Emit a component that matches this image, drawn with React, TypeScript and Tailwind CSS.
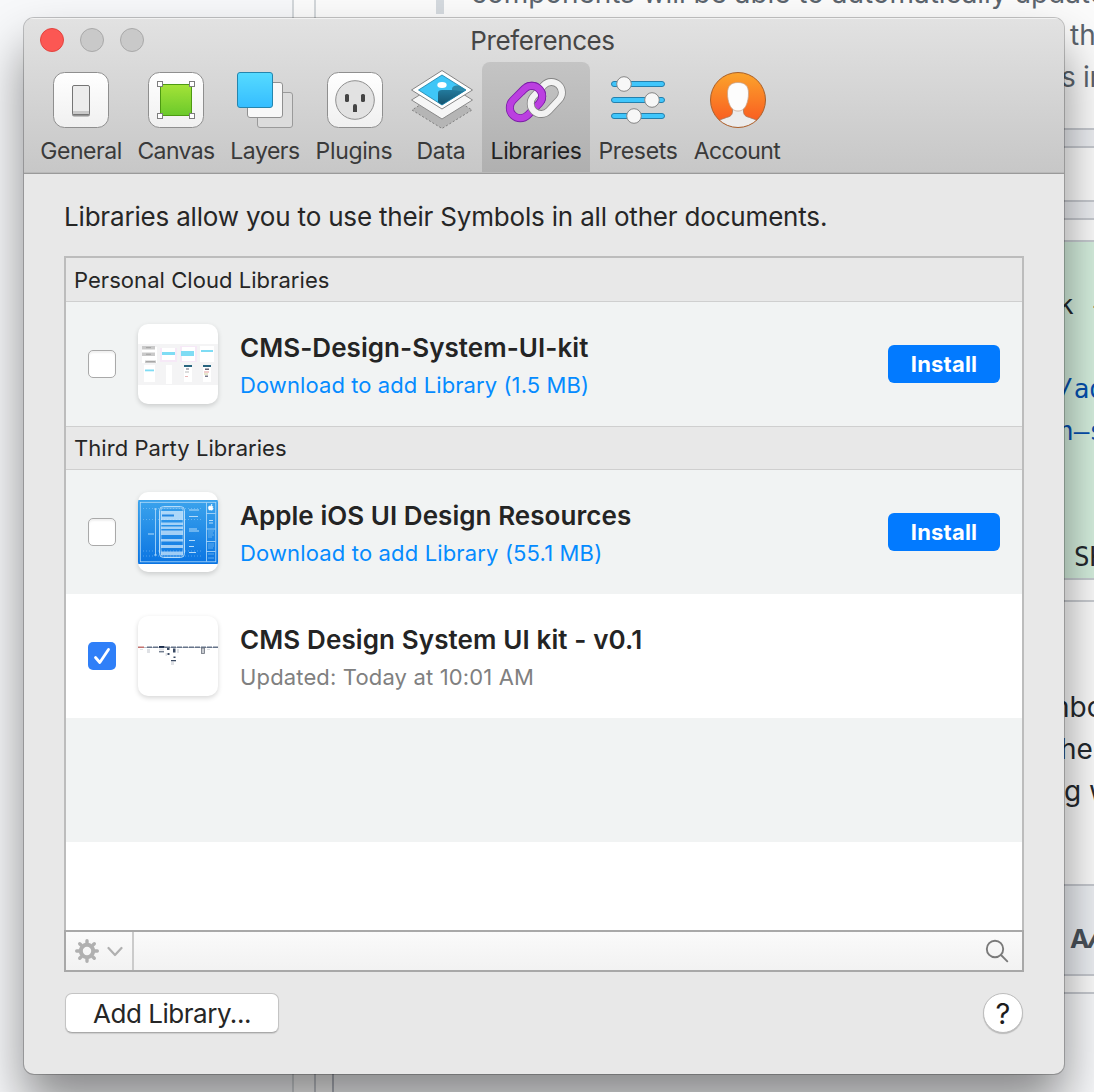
import type { ReactNode } from "react";

const ui = "font-['Inter','Liberation_Sans',sans-serif]";

function GeneralIcon() {
  return (
    <svg className="size-16 overflow-visible" viewBox="0 0 64 64">
      <defs>
        <linearGradient id="plate" x1="0" y1="0" x2="0" y2="1">
          <stop offset="0" stopColor="#ffffff" />
          <stop offset="1" stopColor="#f0f0f0" />
        </linearGradient>
      </defs>
      <rect x="4.5" y="4.5" width="55" height="55" rx="11" fill="url(#plate)" stroke="#8f8f8f" />
      <rect x="23" y="19" width="18" height="29.500" rx="2" fill="#555" opacity=".6" />
      <rect x="23.5" y="17.5" width="17" height="29" rx="1.5" fill="#ececec" stroke="#757575" />
      <rect x="24" y="43" width="16" height="3" fill="#c9c9c9" />
    </svg>
  );
}

function CanvasIcon() {
  return (
    <svg className="size-16 overflow-visible" viewBox="0 0 64 64">
      <defs>
        <linearGradient id="leaf" x1="0" y1="0" x2="0" y2="1">
          <stop offset="0" stopColor="#a4e338" />
          <stop offset="1" stopColor="#6bc92b" />
        </linearGradient>
      </defs>
      <rect x="4.5" y="4.5" width="55" height="55" rx="11" fill="url(#plate)" stroke="#8f8f8f" />
      <rect x="16.5" y="16.5" width="31" height="31" fill="url(#leaf)" stroke="#4d9a12" />
      {[16, 48].map((x) =>
        [16, 48].map((y) => (
          <rect key={`${x}-${y}`} x={x - 2.5} y={y - 2.5} width="5" height="5" fill="#fff" stroke="#7d7d7d" />
        )),
      )}
    </svg>
  );
}

function LayersIcon() {
  return (
    <svg className="size-16 overflow-visible" viewBox="0 0 64 64">
      <defs>
        <linearGradient id="sky" x1="0" y1="0" x2="0" y2="1">
          <stop offset="0" stopColor="#56dbff" />
          <stop offset="1" stopColor="#35bdff" />
        </linearGradient>
      </defs>
      <rect x="24.5" y="24.5" width="35" height="35" rx="2.5" fill="#dcdcdc" stroke="#9a9a9a" />
      <rect x="14.5" y="14.5" width="35" height="35" rx="2.5" fill="#f8f8f8" stroke="#909090" />
      <rect x="4.5" y="4.5" width="35" height="35" rx="2.5" fill="url(#sky)" stroke="#2585ad" />
    </svg>
  );
}

function PluginsIcon() {
  return (
    <svg className="size-16 overflow-visible" viewBox="0 0 64 64">
      <rect x="5.5" y="4.5" width="55" height="55" rx="11" fill="url(#plate)" stroke="#8f8f8f" />
      <circle cx="33" cy="32" r="19.3" fill="#e2e2e2" stroke="#8f8f8f" />
      <rect x="23" y="26" width="4" height="8" rx="1.6" fill="#444" />
      <rect x="39" y="26" width="4" height="8" rx="1.6" fill="#444" />
      <path d="M31 44v-6a2 2 0 0 1 4 0v6z" fill="#444" />
    </svg>
  );
}

function DataIcon() {
  return (
    <svg className="size-16 overflow-visible" viewBox="0 0 64 64">
      <defs>
        <clipPath id="photo">
          <path d="M33 7 57 22 33 37 9.500 22z" />
        </clipPath>
        <linearGradient id="dusk" x1="0" y1="0" x2="0" y2="1">
          <stop offset="0" stopColor="#227a9d" />
          <stop offset="1" stopColor="#134a63" />
        </linearGradient>
      </defs>
      <path d="M33 23 63 42 33 60.500 3 42z" fill="#b5b5b5" stroke="#808080" strokeDasharray="2 2" />
      <path d="M33 13 63.500 32 33 51 2.500 32z" fill="#f6f6f6" stroke="#8a8a8a" />
      <path d="M33 2.500 63.500 22 33 41 2.500 22z" fill="#fff" stroke="#858585" />
      <g clipPath="url(#photo)">
        <rect x="8" y="6" width="50" height="32" fill="#3fc6f7" />
        <ellipse cx="33" cy="17" rx="4.700" ry="3" fill="#fff" />
        <path d="M43 22v-1q0-3 4-3.500h12v14H43z" fill="#2c88a8" />
        <path d="M29 40V25q0-3 4-3h10q4 0 7 1h8v17z" fill="url(#dusk)" />
      </g>
      <path d="M33 7 57 22 33 37 9.500 22z" fill="none" stroke="#1c7fa6" strokeWidth=".8" />
    </svg>
  );
}

function LibrariesIcon() {
  return (
    <svg className="size-16 overflow-visible" viewBox="0 0 64 64">
      <defs>
        <clipPath id="over">
          <rect x="20" y="8" width="30" height="27" />
        </clipPath>
        <g id="violet" fill="none" transform="rotate(-45 22 34)">
          <rect x="3.500" y="23.500" width="37" height="21" rx="10.500" stroke="#7b1fa6" strokeWidth="8" />
          <rect x="3.500" y="23.500" width="37" height="21" rx="10.500" stroke="#bb3fe0" strokeWidth="6.400" />
        </g>
      </defs>
      <use href="#violet" />
      <g fill="none" transform="rotate(-47 42.300 30)">
        <rect x="24.300" y="19.500" width="36" height="21" rx="10.500" stroke="#858585" strokeWidth="7.800" />
        <rect x="24.300" y="19.500" width="36" height="21" rx="10.500" stroke="#f3f3f3" strokeWidth="6.200" />
      </g>
      <use href="#violet" clipPath="url(#over)" />
    </svg>
  );
}

function PresetsIcon() {
  return (
    <svg className="size-16 overflow-visible" viewBox="0 0 64 64">
      {[
        [16, 18],
        [32, 46],
        [48, 28],
      ].map(([y, x]) => (
        <g key={y}>
          <rect x="5.500" y={y - 2.5} width="53" height="5" rx="2.500" fill="#40c6fb" stroke="#2480ad" />
          <circle cx={x} cy={y} r="7.300" fill="#f7f7f7" stroke="#868686" />
        </g>
      ))}
    </svg>
  );
}

function AccountIcon() {
  return (
    <svg className="size-16 overflow-visible" viewBox="0 0 64 64">
      <defs>
        <linearGradient id="amber" x1="0" y1="0" x2="0" y2="1">
          <stop offset="0" stopColor="#fba42c" />
          <stop offset="1" stopColor="#f9541f" />
        </linearGradient>
        <clipPath id="badge">
          <circle cx="33" cy="32" r="27.500" />
        </clipPath>
      </defs>
      <circle cx="33" cy="32" r="27.500" fill="url(#amber)" />
      <g clipPath="url(#badge)" stroke="#a87558" strokeWidth=".8">
        <path d="M27.500 36v7c0 4-2 5.500-6 6.500l-7 2.500v12h37V52l-7-2.500c-4-1-6-2.500-6-6.500v-7z" fill="#ececec" />
        <path d="M33 14.500c7 0 10.500 3.500 10.500 10.500 0 5-.8 9-2.500 12.500-2 4-4.500 5.500-8 5.500s-6-1.500-8-5.500c-1.700-3.500-2.500-7.500-2.500-12.500 0-7 3.500-10.500 10.500-10.500z" fill="#fdfdfd" stroke="#c9a48c" />
      </g>
      <circle cx="33" cy="32" r="27.500" fill="none" stroke="#a8602c" />
    </svg>
  );
}

const tabs: { label: string; icon: ReactNode; width: string; tracking: string }[] = [
  { label: "General", icon: <GeneralIcon />, width: "w-[98px]", tracking: "tracking-[-0.45px]" },
  { label: "Canvas", icon: <CanvasIcon />, width: "w-[92px]", tracking: "tracking-[-0.6px]" },
  { label: "Layers", icon: <LayersIcon />, width: "w-[86px]", tracking: "tracking-[-0.5px]" },
  { label: "Plugins", icon: <PluginsIcon />, width: "w-[92px]", tracking: "tracking-[-0.35px]" },
  { label: "Data", icon: <DataIcon />, width: "w-[82px]", tracking: "tracking-[-0.3px]" },
  { label: "Libraries", icon: <LibrariesIcon />, width: "w-[108px]", tracking: "tracking-[-0.38px]" },
  { label: "Presets", icon: <PresetsIcon />, width: "w-[96px]", tracking: "tracking-[-0.35px]" },
  { label: "Account", icon: <AccountIcon />, width: "w-[102px]", tracking: "tracking-[-0.6px]" },
];

function KitThumb() {
  return (
    <svg className="size-20" viewBox="0 0 80 80">
      <rect y="20" width="80" height="41" fill="#f4f4f5" />
      <g fill="#fff">
        <rect x="4" y="23" width="15" height="16" />
        <rect x="22" y="24" width="17" height="14" fill="#f6e9f7" />
        <rect x="42" y="22" width="17" height="16" fill="#f6e9f7" />
        <rect x="24" y="24" width="13" height="12" />
        <rect x="44" y="23" width="13" height="14" />
        <rect x="62" y="22" width="14" height="16" />
        <rect x="6" y="41" width="11" height="17" />
        <rect x="28" y="41" width="6" height="19" />
        <rect x="46" y="41" width="8" height="17" />
        <rect x="65" y="41" width="8" height="17" />
      </g>
      <g fill="#c9c9c9">
        <rect x="4" y="22" width="13" height="3.500" />
        <rect x="4" y="28.500" width="13" height="3.500" />
        <rect x="7" y="36.500" width="11" height="2.500" />
      </g>
      <g fill="#999">
        <rect x="8" y="23.300" width="5" height=".8" />
        <rect x="8" y="29.800" width="5" height=".8" />
        <rect x="8" y="37.300" width="9" height=".8" />
      </g>
      <g fill="#7fdcf4">
        <rect x="24" y="28" width="13" height="3" />
        <rect x="43" y="27" width="13" height="5" />
        <rect x="63" y="26" width="12" height="2" />
        <rect x="7" y="45.500" width="9" height="1.800" />
      </g>
      <rect x="46" y="41" width="8" height="2" fill="#27647f" />
      <rect x="65" y="41" width="8" height="2" fill="#27647f" />
      <rect x="48" y="44.500" width="3" height="1" fill="#667" />
      <rect x="67" y="44.500" width="4" height="1.500" fill="#667" />
      <rect x="47" y="47.500" width="4" height="1" fill="#bbb" />
      <rect x="66" y="47.500" width="5" height="1" fill="#e49b9b" />
      <rect x="66" y="49.500" width="4" height="1" fill="#cfcf9b" />
      <rect x="67" y="51.500" width="3" height="1.500" fill="#778" />
      <rect x="47" y="52" width="3" height="1" fill="#e8b5b5" />
    </svg>
  );
}

function BlueprintThumb() {
  return (
    <svg className="size-20" viewBox="0 0 80 80">
      <defs>
        <linearGradient id="blueprint" x1="0" y1="0" x2="0" y2="1">
          <stop offset="0" stopColor="#3ba3ec" />
          <stop offset="1" stopColor="#0a74e2" />
        </linearGradient>
      </defs>
      <rect y="8" width="80" height="64" fill="url(#blueprint)" />
      <g fill="none" stroke="#b5dcfa" strokeWidth=".8">
        <rect x="2.300" y="10.300" width="75.500" height="59.500" />
        <path d="M68.500 10.500v59M68.500 21.500h9M68.500 37h9M68.500 49.500h9M68.500 59.500h9M17.500 16.500v47M16 17h3M16 63h3" />
        <path d="M5 16.500h60M5 27.500h60M5 59h60M5 64h60" strokeDasharray="1 2" strokeWidth=".4" />
        <rect x="21.500" y="14.500" width="25" height="51" rx="4" strokeWidth="1" />
        <rect x="23" y="16" width="22" height="48" rx="2.500" strokeWidth=".6" />
      </g>
      <rect x="23" y="19" width="22" height="9" fill="#d5ecfd" opacity=".75" />
      <rect x="24" y="22.500" width="12" height="2" fill="#2487e2" />
      <g fill="#cfe8fc" opacity=".75">
        <rect x="23" y="30.500" width="22" height="2.500" />
        <rect x="23" y="34.500" width="22" height="2.500" />
        <rect x="23" y="38.500" width="22" height="4.500" />
        <rect x="23" y="47" width="22" height="2.500" />
        <rect x="23" y="53" width="22" height="3" />
        <rect x="23" y="59.500" width="22" height="3.500" />
      </g>
      <g fill="#b4dbf9">
        <rect x="51" y="17.500" width="10" height="1" />
        <rect x="51" y="24" width="9" height="1" />
        <rect x="51" y="36.500" width="8" height="1" />
        <rect x="51" y="38.500" width="10" height="1" />
        <rect x="51" y="48" width="6" height="1" />
        <rect x="51" y="54" width="5" height="1" />
        <rect x="51" y="60" width="7" height="1" />
        <rect x="10" y="41.500" width="6" height="1" />
        <rect x="71" y="28" width="4" height="1" />
        <rect x="71" y="30.500" width="4" height="1" />
      </g>
      <path d="M70 39h6M70 41h5M70 43h6M70 45h4M70 52h6M70 54h6M70 56h5M70 62h6M70 66h6" stroke="#7fc0f4" strokeWidth=".7" />
      <path d="M73 14.200q1-.5 2 .4-.9 1 .2 2.200-.9 2-1.900 1.300-.8-.4-1.500 0c-1.300.2-2.200-3.700-.3-4 .6-.1 1 .3 1.500.1zm0-.5q0-1.200 1-1.500 0 1.200-1 1.500z" fill="#fff" stroke="#fff" strokeWidth=".6" />
    </svg>
  );
}

function SheetThumb() {
  return (
    <svg className="size-20" viewBox="0 0 80 80">
      <rect y="31" width="80" height="1" fill="#b9bfc9" />
      <rect y="30.500" width="6" height="1.500" fill="#c4726f" />
      {[9, 15, 21, 27, 33, 39, 45, 51, 57, 63, 69, 75].map((x) => (
        <rect key={x} x={x} y="30.500" width="5" height="1.500" fill="#66748a" />
      ))}
      <rect x="21" y="30" width="5.500" height="1.800" fill="#1b2c4c" />
      <g fill="#3a4a63">
        <rect x="21" y="35.300" width="5" height="1" />
        <rect x="29" y="32" width="2.500" height="2" />
        <rect x="29.500" y="37" width="2" height="2" />
        <rect x="35" y="32.500" width="2.500" height="4" />
        <rect x="35.500" y="40.500" width="2" height="1.500" />
        <rect x="33" y="44" width="5" height="1.300" />
      </g>
      <rect x="63.500" y="32" width="3" height="5.500" fill="#c9ccd1" stroke="#6d737e" strokeWidth=".8" />
      <g fill="#dfe1e5">
        <rect x="9" y="33" width="3" height="4" />
        <rect x="21" y="32.500" width="5" height="2" />
        <rect x="27.500" y="37" width="1.500" height="3" />
        <rect x="39" y="33" width="2" height="4" />
        <rect x="33" y="46" width="3" height="3" />
        <rect x="2" y="33" width="3" height="1" />
        <rect x="69" y="33" width="3" height="1" />
      </g>
    </svg>
  );
}

function Checkbox({ checked = false }: { checked?: boolean }) {
  return checked ? (
    <span className="flex size-7 items-center justify-center rounded-[5px] bg-[#2f7ff8]">
      <svg className="size-7" viewBox="0 0 28 28" fill="none" stroke="#fff" strokeWidth="2.800" strokeLinecap="round" strokeLinejoin="round">
        <path d="M7.500 15.500 11.800 20.500 20.500 7.500" />
      </svg>
    </span>
  ) : (
    <span className="size-7 rounded-[5px] border border-[#a9a9a9] bg-white shadow-[inset_0_2px_2px_rgba(0,0,0,0.06)]" />
  );
}

function LibraryRow(props: {
  name: string;
  nameTracking: string;
  detail: string;
  detailTracking: string;
  thumb: ReactNode;
  checked?: boolean;
  install?: boolean;
  tint?: boolean;
}) {
  return (
    <div className={`flex h-[124px] items-center px-[22px] ${props.tint ? "bg-[#f1f3f3]" : "bg-white"}`}>
      <Checkbox checked={props.checked} />
      <div className="ml-[22px] size-20 overflow-hidden rounded-[10px] bg-white shadow-[0_2px_5px_rgba(0,0,0,0.16)]">
        {props.thumb}
      </div>
      <div className="ml-[22px] flex flex-1 flex-col gap-[3px] pt-[3px]">
        <div className={`h-9 text-[26px] leading-9 font-semibold whitespace-nowrap text-[#242424] ${props.nameTracking}`}>
          {props.name}
        </div>
        <div
          className={`h-8 text-[22px] leading-8 whitespace-nowrap ${props.detailTracking} ${props.install ? "text-[#058bff]" : "text-[#808080]"}`}
        >
          {props.detail}
        </div>
      </div>
      {props.install && (
        <button className="h-[38px] w-28 rounded-[6px] bg-[#027aff] text-[22px] font-bold tracking-[0.2px] text-white">
          Install
        </button>
      )}
    </div>
  );
}

function SectionHeader({ children, className }: { children: ReactNode; className: string }) {
  return (
    <div className={`flex h-11 items-center border-b border-[#cfcfcf] bg-[#e8e8e8] pl-2 text-[22px] tracking-[0.05px] text-[#262626] ${className}`}>
      {children}
    </div>
  );
}

function Backdrop() {
  return (
    <div className={`absolute inset-0 flex overflow-hidden bg-[#fbfbfb] ${ui}`}>
      <div className="flex w-[436px] shrink-0 flex-col">
        <div className="flex flex-1">
          <div className="w-[294px] border-r-2 border-[#d3d7da] bg-[#f7f8fa]" />
          <div className="w-[22px] border-r-2 border-[#d3d7da]" />
        </div>
        <div className="flex h-[100px]">
          <div className="w-[294px] border-r-2 border-[#d3d7da] bg-[#f7f8fa]" />
          <div className="w-[22px] border-r-2 border-[#c5c8ce]" />
          <div className="w-[18px] border-r-2 border-[#b5b9c2]" />
          <div className="flex-1 bg-[#f7f8fa]" />
        </div>
      </div>
      <div className="flex flex-1 flex-col overflow-hidden">
        <div className="h-[128px] shrink-0 text-[28px] leading-[42px] whitespace-nowrap text-[#5b646d]">
          <div className="-mt-[28px] border-l-8 border-[#d5dadf] pl-[27px] tracking-[-0.05px]">
            components will be able to automatically updated
          </div>
          <div className="pl-[634px]">the</div>
          <div className="pl-[625px] tracking-[-0.3px]">s in</div>
        </div>
        <div className="h-[20px] shrink-0 border-y-2 border-[#c6c9cf] bg-[#eceef2]" />
        <div className="h-[52px] shrink-0" />
        <div className="h-[20px] shrink-0 border-y-2 border-[#c6c9cf] bg-[#eceef2]" />
        <div className="h-[20px] shrink-0" />
        <div className="h-[340px] shrink-0 border-y-2 border-[#c6cbd0] bg-[#d5efde] font-['DejaVu_Sans_Mono','Liberation_Mono',monospace] text-[26px] leading-[42px] text-[#24292e]">
          <div className="mt-[42px] pl-[622px] whitespace-pre">k -</div>
          <div className="mt-[42px] pl-[622px] whitespace-pre text-[#0550ae]">/ad</div>
          <div className="pl-[622px] whitespace-pre text-[#0550ae]">n–s</div>
          <div className="mt-[84px] pl-[638px] whitespace-pre">SK</div>
        </div>
        <div className="h-[22px] shrink-0 border-b-2 border-[#c9ccd1]" />
        <div className="h-[282px] shrink-0 pt-[84px] text-[28px] leading-[42px] whitespace-nowrap text-[#24292e]">
          <div className="pl-[609px]">mbol</div>
          <div className="pl-[624px]">he</div>
          <div className="pl-[628px]">g w</div>
        </div>
        <div className="flex h-[92px] shrink-0 items-baseline border-y-2 border-[#c6c9cf] bg-[#eceff3] pt-[34px] pl-[634px] text-[#4a525a]">
          <span className="text-[26px] leading-8 font-bold">A</span>
          <span className="-ml-0.5 text-[33px] leading-8 font-medium italic">A</span>
        </div>
        <div className="h-[18px] shrink-0 border-b-2 border-[#c6c9cf]" />
        <div className="flex-1 bg-[#f7f8fa]" />
      </div>
    </div>
  );
}

export default function App() {
  return (
    <div className="relative h-[1092px] w-[1094px] overflow-hidden">
      <Backdrop />
      <main
        className={`relative mt-[18px] ml-6 flex h-[1056px] w-[1040px] flex-col overflow-hidden rounded-[10px] bg-[#e8e8e8] shadow-[0_0_0_1px_rgba(0,0,0,0.22),0_30px_50px_rgba(0,0,0,0.45)] ${ui}`}
      >
        <header className="h-[156px] border-b border-[#9a9a9a] bg-gradient-to-b from-[#e2e2e2] to-[#c7c7c7] shadow-[inset_0_1px_0_#f2f2f2,inset_0_-1px_0_#b9b9b9]">
          <div className="grid h-11 grid-cols-[1fr_auto_1fr] items-center">
            <div className="flex gap-4 pl-4">
              <span className="size-6 rounded-full border border-[#e2443f] bg-[#fc5753]" />
              <span className="size-6 rounded-full border border-[#a9a9a9] bg-[#c9c9c9]" />
              <span className="size-6 rounded-full border border-[#a9a9a9] bg-[#c9c9c9]" />
            </div>
            <h1 className="pt-px pr-[3px] text-[26px] tracking-[-0.4px] text-[#464646]">Preferences</h1>
          </div>
          <nav className="flex h-[110px] pl-2">
            {tabs.map((t) => (
              <div
                key={t.label}
                className={`flex flex-col items-center rounded-t-[8px] pt-1.5 ${t.width} ${t.label === "Libraries" ? "bg-gradient-to-b from-[#c4c4c4] to-[#b0b0b0] text-[#222]" : "text-[#3a3a3a]"}`}
              >
                {t.icon}
                <span className={`mt-[3px] text-[23px] leading-8 ${t.tracking}`}>{t.label}</span>
              </div>
            ))}
          </nav>
        </header>
        <div className="flex flex-1 flex-col px-10 pt-[25px]">
          <p className="h-9 text-[26px] leading-9 tracking-[-0.185px] whitespace-nowrap text-[#262626]">
            Libraries allow you to use their Symbols in all other documents.
          </p>
          <section className="mt-[21px] flex h-[716px] flex-col border-2 border-[#bcbcbc] bg-white">
            <SectionHeader className="pt-0.5">Personal Cloud Libraries</SectionHeader>
            <LibraryRow
              tint
              install
              thumb={<KitThumb />}
              name="CMS-Design-System-UI-kit"
              nameTracking="tracking-[0.05px]"
              detail="Download to add Library (1.5 MB)"
              detailTracking="tracking-[0.09px]"
            />
            <SectionHeader className="border-t">Third Party Libraries</SectionHeader>
            <LibraryRow
              tint
              install
              thumb={<BlueprintThumb />}
              name="Apple iOS UI Design Resources"
              nameTracking="tracking-[0.05px]"
              detail="Download to add Library (55.1 MB)"
              detailTracking="tracking-[0.15px]"
            />
            <LibraryRow
              checked
              thumb={<SheetThumb />}
              name="CMS Design System UI kit - v0.1"
              nameTracking="tracking-[0.11px]"
              detail="Updated: Today at 10:01 AM"
              detailTracking="tracking-[0.15px]"
            />
            <div className="h-[124px] bg-[#f1f3f3]" />
            <div className="flex-1" />
            <footer className="-mx-0.5 -mb-0.5 flex h-[42px] border-2 border-[#a8a8a8] bg-gradient-to-b from-[#fafafa] to-[#f2f2f2]">
              <div className="flex w-[68px] items-center gap-2 border-r-2 border-[#cbcbcb] pl-[9px]">
                <svg className="size-6" viewBox="0 0 24 24" fill="none" stroke="#b0b0b0">
                  <circle cx="12" cy="12" r="6.200" strokeWidth="4" />
                  <path
                    d="M12 4V1.700M12 20v2.300M4 12H1.700M20 12h2.300M6.300 6.300 4.700 4.700M17.700 17.700l1.600 1.600M6.300 17.700l-1.600 1.600M17.700 6.300l1.600-1.600"
                    strokeWidth="3.400"
                    strokeLinecap="round"
                  />
                </svg>
                <svg className="h-3 w-4" viewBox="0 0 16 12" fill="none" stroke="#b0b0b0" strokeWidth="2.200" strokeLinecap="round" strokeLinejoin="round">
                  <path d="m1.500 3 6.500 7 6.500-7" />
                </svg>
              </div>
              <div className="flex flex-1 items-center justify-end pr-[13px]">
                <svg className="size-6" viewBox="0 0 24 24" fill="none" stroke="#7a7a7a" strokeWidth="1.900" strokeLinecap="round">
                  <circle cx="10" cy="10" r="8.200" />
                  <path d="m16 16 6.300 6.300" />
                </svg>
              </div>
            </footer>
          </section>
          <div className="mt-[21px] flex items-center justify-between">
            <button className="ml-px h-10 w-[214px] rounded-[7px] border border-[#c4c4c4] border-b-[#a9a9a9] bg-white pt-0.5 text-[26px] leading-none tracking-[-0.48px] text-[#262626] shadow-[0_1px_1px_rgba(0,0,0,0.12)]">
              Add Library...
            </button>
            <button className="mr-px flex size-10 items-center justify-center rounded-full border border-[#bdbdbd] bg-white text-[29px] leading-none text-[#1c1c1c] shadow-[0_1px_1px_rgba(0,0,0,0.2)]">
              ?
            </button>
          </div>
        </div>
      </main>
    </div>
  );
}
